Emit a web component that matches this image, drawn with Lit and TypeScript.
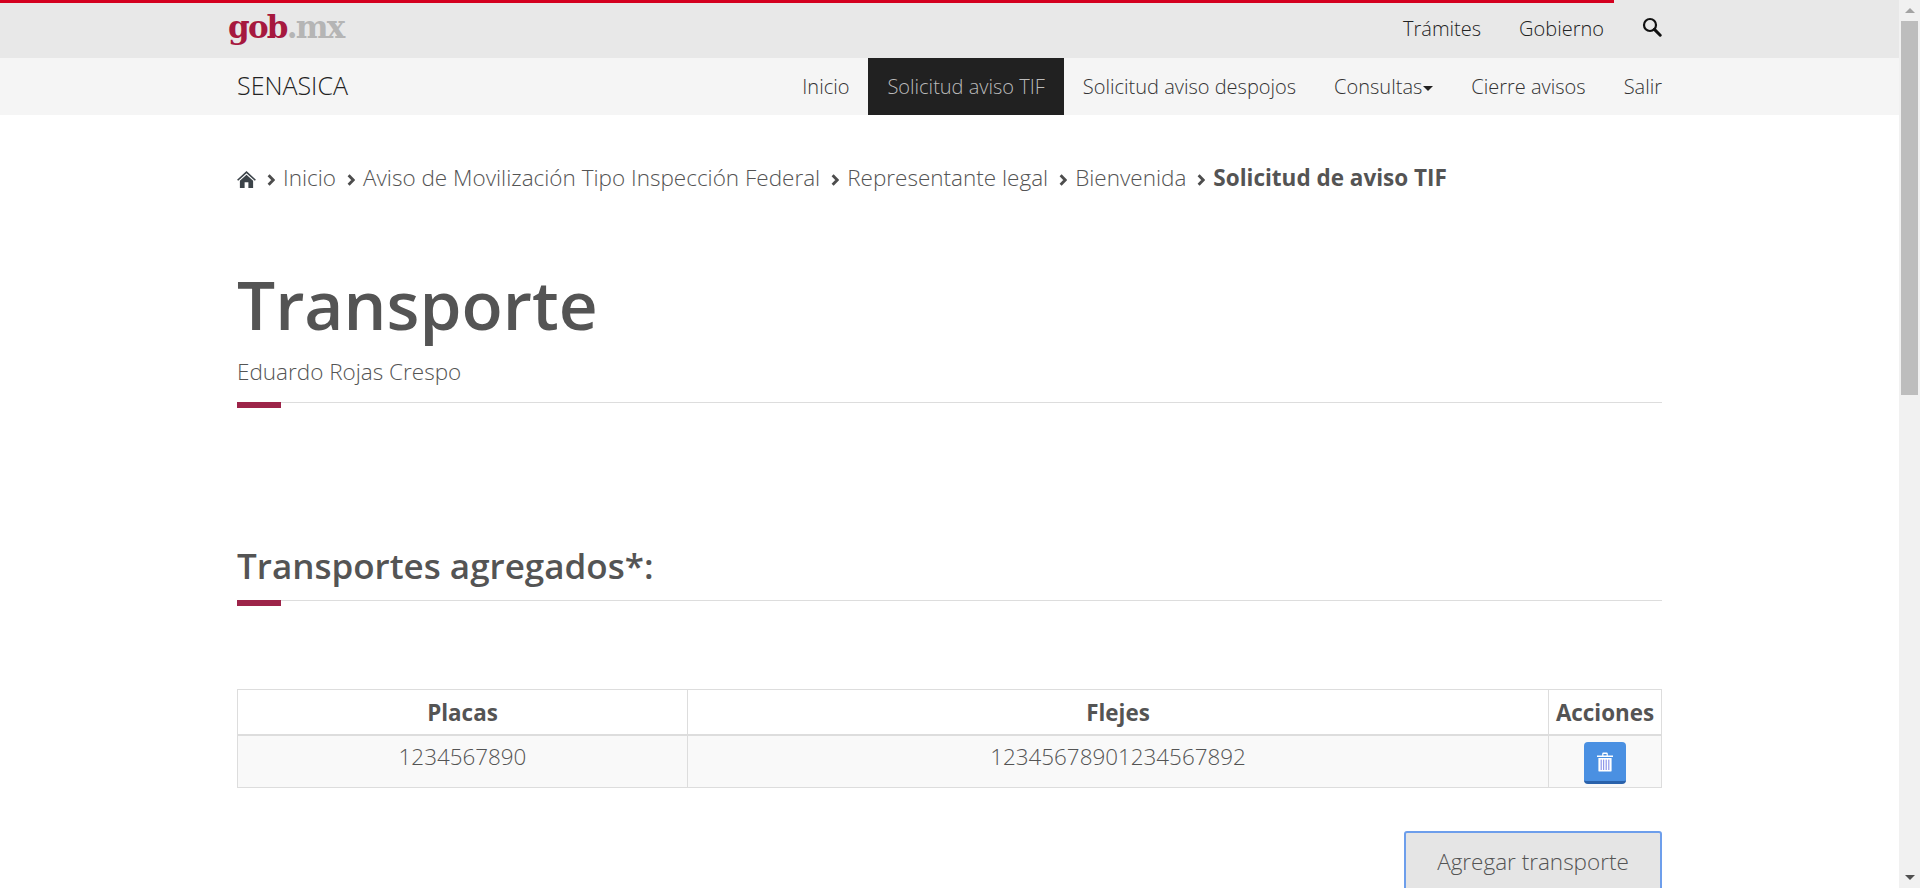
import { LitElement, html, css, svg } from 'lit';
import { customElement } from 'lit/decorators.js';

const chevron = html`<svg class="chev" viewBox="0 0 8 12" width="8" height="12">
  <path d="M1.6 1.2 L6.2 6 L1.6 10.8" fill="none" stroke="#4d4d4d" stroke-width="2.8" />
</svg>`;

const homeIcon = html`<svg class="home" viewBox="0 0 20 18" width="19" height="17">
  <path fill="#3c4349" d="M10 0 L20 9.2 L18.8 10.4 L10 2.4 L1.2 10.4 L0 9.2 Z" />
  <path fill="#3c4349" d="M10 4 L17 10.2 V18 H12 V12 H8 V18 H3 V10.2 Z" />
</svg>`;

const searchIcon = html`<svg viewBox="0 0 20 20" width="20" height="20">
  <circle cx="8" cy="8" r="6" fill="none" stroke="#111" stroke-width="2.2" />
  <path d="M12.4 12.4 L18.2 18.2" stroke="#111" stroke-width="3" stroke-linecap="round" />
</svg>`;

const trashIcon = html`<svg viewBox="0 0 16 20" width="16" height="20">
  <path fill="#fff" d="M0 3.5 H5.2 V1.8 Q5.2 .6 6.4 .6 H9.6 Q10.8 .6 10.8 1.8 V3.5 H16 V5 H0 Z M6.4 3.5 H9.6 V1.9 H6.4 Z" />
  <path fill="#fff" d="M1.4 6 H14.6 V18.4 Q14.6 19.6 13.4 19.6 H2.6 Q1.4 19.6 1.4 18.4 Z" />
  ${svg`<g fill="#8f97ea">
    <rect x="3.6" y="7.6" width="1.2" height="10.4" />
    <rect x="6" y="7.6" width="1.2" height="10.4" />
    <rect x="8.6" y="7.6" width="1.2" height="10.4" />
    <rect x="11.2" y="7.6" width="1.2" height="10.4" />
  </g>`}
</svg>`;

const BREADCRUMB = [
  'Inicio',
  'Aviso de Movilización Tipo Inspección Federal',
  'Representante legal',
  'Bienvenida',
];

@customElement('app-root')
export class AppRoot extends LitElement {
  static styles = css`
    :host {
      display: flex;
      height: 888px;
      overflow: hidden;
      background: #fff;
      color: #545454;
      font-family: 'Open Sans', sans-serif;
      font-weight: 300;
    }
    .page {
      flex: 1;
      min-width: 0;
    }
    .wrap {
      width: 1425px;
      margin: 0 auto;
      box-sizing: border-box;
    }
    .top {
      height: 58px;
      background: #e8e8e8;
      position: relative;
    }
    .red {
      position: absolute;
      left: 0;
      top: 0;
      width: 1614px;
      height: 3px;
      background: #d4001f;
    }
    .top .wrap,
    .sub .wrap {
      display: flex;
      align-items: center;
      height: 100%;
    }
    .logo {
      font-family: 'DejaVu Serif', serif;
      font-weight: 700;
      font-size: 31px;
      letter-spacing: -1.8px;
      color: #a6193f;
      margin-left: -9px;
      margin-top: -5px;
    }
    .logo span {
      color: #b5b5b5;
    }
    .top-links {
      margin-left: auto;
      display: flex;
      align-items: center;
      gap: 38px;
      font-size: 20px;
      color: #222;
      margin-top: -2px;
    }
    .search {
      display: flex;
      margin-top: -2px;
    }
    .sub {
      height: 57px;
      background: #f5f5f5;
    }
    .brand {
      font-size: 25px;
      color: #222;
      margin-top: -3px;
    }
    .nav {
      margin-left: auto;
      display: flex;
      height: 100%;
      font-size: 20px;
      color: #333;
    }
    .nav a {
      display: flex;
      align-items: center;
      padding: 0 19px;
    }
    .nav a:last-child {
      padding-right: 0;
    }
    .nav a.active {
      background: #212121;
      color: #bbb;
    }
    .caret {
      width: 0;
      height: 0;
      margin-left: 1px;
      margin-top: 4px;
      border-left: 5px solid transparent;
      border-right: 5px solid transparent;
      border-top: 5px solid #222;
    }
    .crumbs {
      display: flex;
      align-items: center;
      padding-top: 48px;
      font-size: 22.5px;
      line-height: 30px;
    }
    .crumbs .chev {
      margin: 3px 8px 0 11px;
    }
    .crumbs .home {
      margin-top: 2px;
    }
    .crumbs b {
      font-weight: 700;
    }
    h1 {
      margin: 67px 0 0;
      font-size: 67.6px;
      line-height: 88px;
      font-weight: 600;
    }
    .owner {
      font-size: 22.5px;
      line-height: 30px;
      margin-top: 9px;
    }
    .rule {
      position: relative;
      height: 1px;
      background: #ddd;
      margin-top: 15px;
    }
    .rule::after {
      content: '';
      position: absolute;
      left: 0;
      top: 0;
      width: 44px;
      height: 6px;
      background: #9d2449;
    }
    h2 {
      margin: 141px 0 0;
      font-size: 35px;
      line-height: 44px;
      font-weight: 600;
    }
    .rule.small {
      margin-top: 12px;
    }
    table {
      width: 100%;
      margin-top: 88px;
      border-collapse: collapse;
      table-layout: fixed;
      font-size: 22.4px;
    }
    th,
    td {
      border: 1px solid #ddd;
      text-align: center;
      padding: 0;
    }
    th {
      height: 44px;
      font-weight: 700;
      border-bottom-width: 2px;
    }
    td {
      height: 51px;
      background: #f9f9f9;
      vertical-align: top;
      line-height: 42px;
    }
    .del {
      display: inline-flex;
      align-items: center;
      justify-content: center;
      width: 42px;
      height: 42px;
      margin-top: 6px;
      vertical-align: top;
      box-sizing: border-box;
      border: none;
      border-bottom: 3px solid #2a62ab;
      border-radius: 4px;
      background: #4a90e2;
      padding: 0;
    }
    .actions {
      display: flex;
      justify-content: flex-end;
      margin-top: 43px;
    }
    .add {
      width: 258px;
      height: 60px;
      box-sizing: border-box;
      border: 2px solid #6d9eeb;
      border-radius: 3px;
      background: #e5e5e5;
      color: #545454;
      font-family: inherit;
      font-weight: 300;
      font-size: 22.5px;
    }
    .scrollbar {
      flex: none;
      width: 21px;
      background: #f1f1f1;
      display: flex;
      flex-direction: column;
      align-items: center;
    }
    .arrow {
      flex: none;
      height: 21px;
      display: flex;
      align-items: center;
      justify-content: center;
    }
    .up {
      border-left: 5px solid transparent;
      border-right: 5px solid transparent;
      border-bottom: 5px solid #a3a3a3;
    }
    .down {
      border-left: 5px solid transparent;
      border-right: 5px solid transparent;
      border-top: 5px solid #505050;
    }
    .thumb {
      flex: none;
      width: 17px;
      height: 374px;
      background: #bdbdbd;
    }
    .rest {
      flex: 1;
    }
  `;

  render() {
    return html`
      <div class="page">
        <header class="top">
          <div class="red"></div>
          <div class="wrap">
            <div class="logo">gob<span>.mx</span></div>
            <div class="top-links">
              <span>Trámites</span>
              <span>Gobierno</span>
              <span class="search">${searchIcon}</span>
            </div>
          </div>
        </header>
        <nav class="sub">
          <div class="wrap">
            <div class="brand">SENASICA</div>
            <div class="nav">
              <a>Inicio</a>
              <a class="active">Solicitud aviso TIF</a>
              <a>Solicitud aviso despojos</a>
              <a>Consultas<i class="caret"></i></a>
              <a>Cierre avisos</a>
              <a>Salir</a>
            </div>
          </div>
        </nav>
        <main class="wrap">
          <div class="crumbs">
            ${homeIcon}
            ${BREADCRUMB.map((c) => html`${chevron}<span>${c}</span>`)}
            ${chevron}<b>Solicitud de aviso TIF</b>
          </div>
          <h1>Transporte</h1>
          <div class="owner">Eduardo Rojas Crespo</div>
          <div class="rule"></div>
          <h2>Transportes agregados*:</h2>
          <div class="rule small"></div>
          <table>
            <colgroup>
              <col style="width: 450px" />
              <col />
              <col style="width: 113px" />
            </colgroup>
            <thead>
              <tr><th>Placas</th><th>Flejes</th><th>Acciones</th></tr>
            </thead>
            <tbody>
              <tr>
                <td>1234567890</td>
                <td>12345678901234567892</td>
                <td><button class="del" aria-label="Eliminar">${trashIcon}</button></td>
              </tr>
            </tbody>
          </table>
          <div class="actions"><button class="add">Agregar transporte</button></div>
        </main>
      </div>
      <aside class="scrollbar">
        <div class="arrow"><i class="up"></i></div>
        <div class="thumb"></div>
        <div class="rest"></div>
        <div class="arrow"><i class="down"></i></div>
      </aside>
    `;
  }
}
